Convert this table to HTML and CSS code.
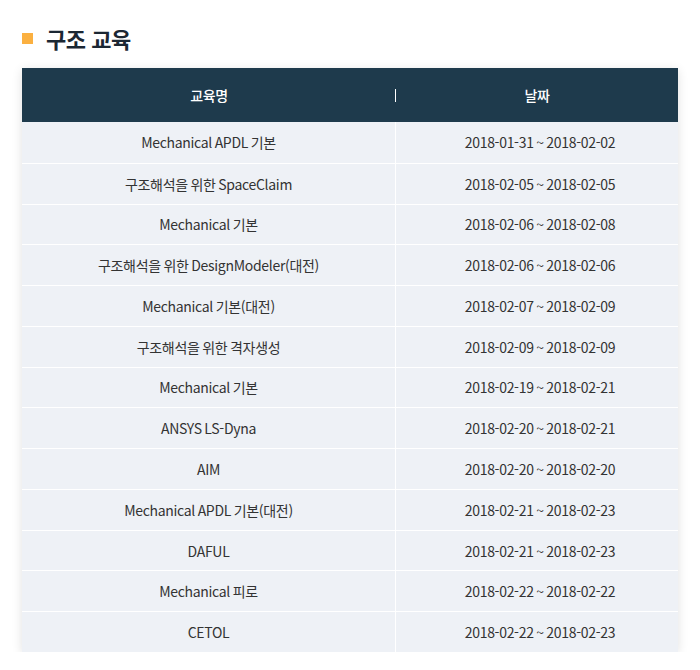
FILE: index.html
```html
<!DOCTYPE html>
<html lang="ko">
<head>
<meta charset="utf-8">
<title>구조 교육</title>
<link rel="stylesheet" href="styles.css">
</head>
<body>
<section class="section">
  <h2 class="title"><span class="mark"></span>구조 교육</h2>
  <div class="table">
    <div class="row head">
      <div class="cell name">교육명</div>
      <div class="cell date">날짜</div>
    </div>
    <div class="row"><div class="cell name">Mechanical APDL 기본</div><div class="cell date">2018-01-31 ~ 2018-02-02</div></div>
    <div class="row"><div class="cell name">구조해석을 위한 SpaceClaim</div><div class="cell date">2018-02-05 ~ 2018-02-05</div></div>
    <div class="row"><div class="cell name">Mechanical 기본</div><div class="cell date">2018-02-06 ~ 2018-02-08</div></div>
    <div class="row"><div class="cell name">구조해석을 위한 DesignModeler(대전)</div><div class="cell date">2018-02-06 ~ 2018-02-06</div></div>
    <div class="row"><div class="cell name">Mechanical 기본(대전)</div><div class="cell date">2018-02-07 ~ 2018-02-09</div></div>
    <div class="row"><div class="cell name">구조해석을 위한 격자생성</div><div class="cell date">2018-02-09 ~ 2018-02-09</div></div>
    <div class="row"><div class="cell name">Mechanical 기본</div><div class="cell date">2018-02-19 ~ 2018-02-21</div></div>
    <div class="row"><div class="cell name">ANSYS LS-Dyna</div><div class="cell date">2018-02-20 ~ 2018-02-21</div></div>
    <div class="row"><div class="cell name">AIM</div><div class="cell date">2018-02-20 ~ 2018-02-20</div></div>
    <div class="row"><div class="cell name">Mechanical APDL 기본(대전)</div><div class="cell date">2018-02-21 ~ 2018-02-23</div></div>
    <div class="row"><div class="cell name">DAFUL</div><div class="cell date">2018-02-21 ~ 2018-02-23</div></div>
    <div class="row"><div class="cell name">Mechanical 피로</div><div class="cell date">2018-02-22 ~ 2018-02-22</div></div>
    <div class="row"><div class="cell name">CETOL</div><div class="cell date">2018-02-22 ~ 2018-02-23</div></div>
  </div>
</section>
</body>
</html>
```

FILE: styles.css
```css
* { box-sizing: border-box; }
html, body { margin: 0; padding: 0; background: #fff; }
body {
  font-family: "Noto Sans CJK KR", "Noto Sans", sans-serif;
  color: #333;
}
.section { padding: 24px 22px 0 22px; }
.title {
  display: flex;
  align-items: center;
  margin: 0 0 16px 0;
  height: 28px;
  font-size: 22px;
  font-weight: 700;
  color: #1b2733;
  letter-spacing: -0.5px;
}
.mark {
  display: inline-block;
  width: 11px;
  height: 11px;
  background: #fbb040;
  margin-right: 13px;
}
.table {
  width: 656px;
  box-shadow: 0 2px 10px rgba(0, 0, 0, 0.12);
  background: #eef1f6;
}
.row {
  display: grid;
  grid-template-columns: 374px 282px;
  height: 40.77px;
  border-top: 1px solid #fff;
}
.row.head {
  height: 54px;
  background: #1e3a4c;
  color: #fff;
  border-top: none;
  font-weight: 500;
}
.row.head + .row { border-top: none; }
.cell {
  display: flex;
  align-items: center;
  justify-content: center;
  font-size: 14px;
  letter-spacing: -0.3px;
  word-spacing: -1px;
  white-space: nowrap;
}
.row .cell.date { padding-left: 6px; }
.row .cell.name { border-right: 1px solid #fff; }
.row.head .cell.name { border-right: none; position: relative; }
.row.head .cell.date { padding-left: 0; }
.row.head .cell.name::after {
  content: "";
  position: absolute;
  right: 0;
  top: 21px;
  width: 1px;
  height: 13px;
  background: #fff;
}
```
